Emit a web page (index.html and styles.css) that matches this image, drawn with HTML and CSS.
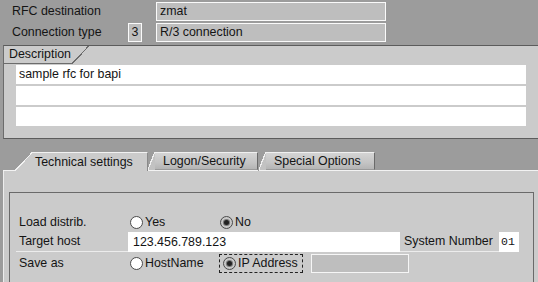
FILE: index.html
```html
<!DOCTYPE html>
<html>
<head>
<meta charset="utf-8">
<link rel="stylesheet" href="styles.css">
</head>
<body>
<div class="header">
  <div class="hrow">
    <div class="hlabel wide">RFC destination</div>
    <div class="hfield">zmat</div>
  </div>
  <div class="hrow">
    <div class="hlabel">Connection type</div>
    <div class="hfield small">3</div>
    <div class="hfield">R/3 connection</div>
  </div>
</div>

<div class="group">
  <div class="gtabrow">
    <div class="gtab">Description</div>
    <div class="gdiag"></div>
  </div>
  <div class="dfields">
    <div class="dfield">sample rfc for bapi</div>
    <div class="dfield"></div>
    <div class="dfield"></div>
  </div>
</div>

<div class="tabstrip">
  <div class="lead"></div>
  <div class="tab active"><div class="diag"></div><div class="tbody">Technical settings</div></div>
  <div class="tab logon"><div class="diag"></div><div class="tbody">Logon/Security</div></div>
  <div class="tab special"><div class="diag"></div><div class="tbody">Special Options</div></div>
  <div class="fill"></div>
</div>

<div class="panel">
  <div class="box">
    <div class="frow r1">
      <div class="flabel">Load distrib.</div>
      <div class="radio first-yes">
        <svg width="13" height="13" viewBox="0 0 13 13"><circle cx="6.5" cy="6.5" r="6" fill="#fff" stroke="#4a4a4a"/></svg>
        <span>Yes</span>
      </div>
      <div class="radio">
        <svg width="13" height="13" viewBox="0 0 13 13"><circle cx="6.5" cy="6.5" r="6" fill="#c9c9c9" stroke="#4a4a4a"/><circle cx="6.5" cy="6.5" r="3.6" fill="#7a7a7a"/><circle cx="6.5" cy="6.5" r="2.5" fill="#222"/></svg>
        <span>No</span>
      </div>
    </div>
    <div class="frow r2">
      <div class="flabel under">Target host</div>
      <div class="tfield">123.456.789.123</div>
      <div class="flabel under sys">System Number</div>
      <div class="nfield">01</div>
    </div>
    <div class="frow r3">
      <div class="flabel">Save as</div>
      <div class="radio first-host">
        <svg width="13" height="13" viewBox="0 0 13 13"><circle cx="6.5" cy="6.5" r="6" fill="#fff" stroke="#4a4a4a"/></svg>
        <span>HostName</span>
      </div>
      <div class="radio focus">
        <svg width="13" height="13" viewBox="0 0 13 13"><circle cx="6.5" cy="6.5" r="6" fill="#c9c9c9" stroke="#4a4a4a"/><circle cx="6.5" cy="6.5" r="3.6" fill="#7a7a7a"/><circle cx="6.5" cy="6.5" r="2.5" fill="#222"/></svg>
        <span>IP Address</span>
      </div>
      <div class="gfield"></div>
    </div>
  </div>
</div>
</body>
</html>
```

FILE: styles.css
```css
* { box-sizing: border-box; }

html, body {
  margin: 0;
  padding: 0;
  width: 538px;
  height: 282px;
  overflow: hidden;
}

body {
  background: #9c9c9c;
  font-family: "Liberation Sans", Arial, sans-serif;
  font-size: 12.4px;
  color: #141414;
  line-height: 1;
}

/* header */
.header {
  padding: 2px 0 3px 8px;
  display: flex;
  flex-direction: column;
  gap: 2px;
}
.hrow {
  display: flex;
  height: 19px;
  align-items: stretch;
}
.hlabel {
  width: 120px;
  padding-left: 4px;
  display: flex;
  align-items: center;
}
.hlabel.wide { width: 148px; }
.hfield {
  width: 230px;
  border: 1px solid #fafafa;
  background: #bebebe;
  padding-left: 3px;
  display: flex;
  align-items: center;
}
.hfield.small {
  width: 14px;
  margin-right: 14px;
  padding-left: 0;
  justify-content: center;
}

/* description group */
.group {
  margin-left: 3px;
  border-top: 1px solid #5c5c5c;
  border-left: 1px solid #6c6c6c;
  border-bottom: 1px solid #5c5c5c;
  background: #cbcbcb;
}
.gtabrow {
  display: flex;
  height: 18px;
}
.gtab {
  width: 68px;
  height: 18px;
  padding-left: 5px;
  border-bottom: 1px solid #6c6c6c;
  display: flex;
  align-items: center;
}
.gdiag {
  width: 17px;
  height: 18px;
  background: linear-gradient(to bottom right, transparent calc(50% - 0.8px), #6c6c6c calc(50% - 0.8px), #6c6c6c calc(50% + 0.4px), transparent calc(50% + 0.4px));
}
.dfields {
  padding: 1px 0 12px 12px;
  display: flex;
  flex-direction: column;
  gap: 2px;
}
.dfield {
  width: 510px;
  height: 19px;
  background: #fff;
  padding-left: 3px;
  display: flex;
  align-items: center;
}

/* tab strip */
.tabstrip {
  margin-left: 3px;
  padding-top: 13px;
  display: flex;
  align-items: flex-end;
}
.lead {
  width: 12px;
  border-bottom: 1px solid #f2f2f2;
}
.tab {
  display: flex;
  height: 19px;
}
.tab.active .diag {
  width: 18px;
  height: 19px;
  background: linear-gradient(to bottom right, transparent calc(50% - 0.8px), #f2f2f2 calc(50% - 0.8px), #f2f2f2 calc(50% + 0.4px), #cbcbcb calc(50% + 0.4px));
}
.tab.active .tbody {
  width: 115px;
  background: #cbcbcb;
  border-top: 1px solid #f2f2f2;
  border-right: 1px solid #8a8a8a;
  padding-left: 2px;
  display: flex;
  align-items: center;
}
.tab.logon, .tab.special {
  border-bottom: 1px solid #f2f2f2;
}
.tab.logon .diag, .tab.special .diag {
  width: 7px;
  height: 18px;
  background: linear-gradient(to bottom right, transparent calc(50% - 0.8px), #f0f0f0 calc(50% - 0.8px), #f0f0f0 calc(50% + 0.4px), #c2c2c2 calc(50% + 0.4px));
}
.tab.logon .tbody, .tab.special .tbody {
  height: 18px;
  background: linear-gradient(#d4d4d4, #c4c4c4 60%, #b4b4b4);
  border-top: 1px solid #f0f0f0;
  border-right: 1px solid #6a6a6a;
  border-bottom: 1px solid #9a9a9a;
  padding-left: 8px;
  display: flex;
  align-items: center;
}
.tab.logon .tbody { width: 103px; }
.tab.special { margin-left: 1px; }
.tab.special .tbody { width: 109px; }
.fill {
  flex: 1;
  border-bottom: 1px solid #f2f2f2;
}

/* panel */
.panel {
  margin-left: 3px;
  border-left: 1px solid #ededed;
  background: #cbcbcb;
  padding: 21px 0 0 5px;
  height: 111px;
}
.box {
  width: 525px;
  height: 90px;
  border: 1px solid #6a6a6a;
  border-bottom: none;
  padding: 19px 0 0 6px;
}
.frow {
  display: flex;
  align-items: center;
}
.frow.r1 { height: 20px; }
.frow.r2 { height: 20px; align-items: stretch; }
.frow.r3 { height: 19px; margin-top: 2px; }

.flabel {
  width: 112px;
  padding-left: 3px;
  display: flex;
  align-items: center;
  height: 20px;
}
.flabel.under {
  border-bottom: 1px solid #ececec;
}
.flabel.sys {
  width: 99px;
  padding-left: 4px;
}
.tfield {
  width: 272px;
  background: #fff;
  padding-left: 5px;
  display: flex;
  align-items: center;
}
.nfield {
  width: 20px;
  background: #fff;
  padding-left: 2px;
  font-family: "Liberation Mono", "Courier New", monospace;
  font-size: 11.5px;
  display: flex;
  align-items: center;
}

.radio {
  display: flex;
  align-items: center;
  gap: 2px;
  height: 19px;
  border: 1px dashed transparent;
  padding: 0 4px 0 1px;
}
.radio svg { display: block; flex: none; }
.radio.first-yes { width: 90px; }
.radio.first-host { width: 91px; }
.radio.focus {
  border-color: #222;
  padding-left: 3px;
}
.gfield {
  width: 98px;
  height: 19px;
  margin-left: 8px;
  border: 1px solid #f6f6f6;
  background: #bebebe;
}
```
